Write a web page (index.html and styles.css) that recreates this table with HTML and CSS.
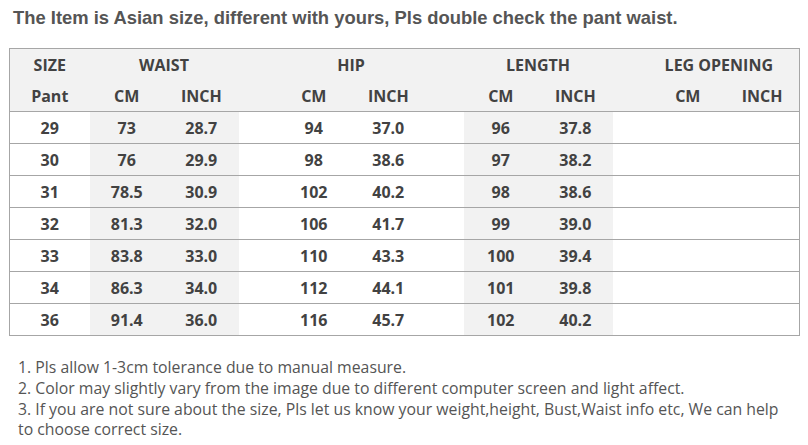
FILE: index.html
```html
<!DOCTYPE html>
<html>
<head>
<meta charset="utf-8">
<link rel="stylesheet" href="styles.css">
</head>
<body>
<h1 class="title">The Item is Asian size, different with yours, Pls double check the pant waist.</h1>
<table class="chart">
  <colgroup>
    <col class="c-size">
    <col class="c-val"><col class="c-val">
    <col class="c-gap">
    <col class="c-val"><col class="c-val">
    <col class="c-gap">
    <col class="c-val"><col class="c-val">
    <col class="c-gap">
    <col class="c-val"><col class="c-val">
  </colgroup>
  <thead>
    <tr>
      <th>SIZE</th>
      <th colspan="2">WAIST</th>
      <th></th>
      <th colspan="2">HIP</th>
      <th></th>
      <th colspan="2">LENGTH</th>
      <th></th>
      <th colspan="2" class="leg">LEG OPENING</th>
    </tr>
    <tr>
      <th>Pant</th>
      <th>CM</th><th>INCH</th>
      <th></th>
      <th>CM</th><th>INCH</th>
      <th></th>
      <th>CM</th><th>INCH</th>
      <th></th>
      <th>CM</th><th>INCH</th>
    </tr>
  </thead>
  <tbody>
    <tr><td>29</td><td class="sh">73</td><td class="sh">28.7</td><td></td><td>94</td><td>37.0</td><td></td><td class="sh">96</td><td class="sh">37.8</td><td></td><td></td><td></td></tr>
    <tr><td>30</td><td class="sh">76</td><td class="sh">29.9</td><td></td><td>98</td><td>38.6</td><td></td><td class="sh">97</td><td class="sh">38.2</td><td></td><td></td><td></td></tr>
    <tr><td>31</td><td class="sh">78.5</td><td class="sh">30.9</td><td></td><td>102</td><td>40.2</td><td></td><td class="sh">98</td><td class="sh">38.6</td><td></td><td></td><td></td></tr>
    <tr><td>32</td><td class="sh">81.3</td><td class="sh">32.0</td><td></td><td>106</td><td>41.7</td><td></td><td class="sh">99</td><td class="sh">39.0</td><td></td><td></td><td></td></tr>
    <tr><td>33</td><td class="sh">83.8</td><td class="sh">33.0</td><td></td><td>110</td><td>43.3</td><td></td><td class="sh">100</td><td class="sh">39.4</td><td></td><td></td><td></td></tr>
    <tr><td>34</td><td class="sh">86.3</td><td class="sh">34.0</td><td></td><td>112</td><td>44.1</td><td></td><td class="sh">101</td><td class="sh">39.8</td><td></td><td></td><td></td></tr>
    <tr><td>36</td><td class="sh">91.4</td><td class="sh">36.0</td><td></td><td>116</td><td>45.7</td><td></td><td class="sh">102</td><td class="sh">40.2</td><td></td><td></td><td></td></tr>
  </tbody>
</table>
<div class="notes">
  <p>1. Pls allow 1-3cm tolerance due to manual measure.</p>
  <p>2. Color may slightly vary from the image due to different computer screen and light affect.</p>
  <p>3. If you are not sure about the size, Pls let us know your weight,height, Bust,Waist info etc, We can help to choose correct size.</p>
</div>
</body>
</html>
```
FILE: styles.css
```css
html, body {
  margin: 0;
  padding: 0;
  background: #ffffff;
}
body {
  width: 808px;
  height: 445px;
  overflow: hidden;
}
.title {
  margin: 0;
  padding: 7px 0 0 13px;
  font-family: "Liberation Sans", Arial, sans-serif;
  font-weight: bold;
  font-size: 18.4px;
  line-height: 22px;
  color: #555555;
}
.chart {
  margin: 19px 0 0 9px;
  width: 791px;
  table-layout: fixed;
  border-collapse: collapse;
  border: 1px solid #a6a6a6;
  font-family: "Open Sans", sans-serif;
  font-weight: 700;
  font-size: 16px;
  color: #424242;
}
.c-size { width: 80px; }
.c-val { width: 74.5px; }
.c-gap { width: 38px; }
.chart th, .chart td {
  height: 31px;
  padding: 0;
  text-align: center;
  vertical-align: middle;
  font-weight: 700;
}
.chart thead tr {
  background: #f2f2f2;
}
.chart thead tr:last-child th {
  border-bottom: 1px solid #a6a6a6;
}
.chart tbody tr {
  border-bottom: 1px solid #a6a6a6;
}
.chart td.sh {
  background: #f2f2f2;
}
.chart th.leg {
  padding-right: 12px;
}
.notes {
  margin: 21px 0 0 18px;
  width: 770px;
  font-family: "Open Sans", sans-serif;
  font-size: 15.8px;
  line-height: 20.8px;
  color: #555555;
}
.notes p {
  margin: 0;
}
```
